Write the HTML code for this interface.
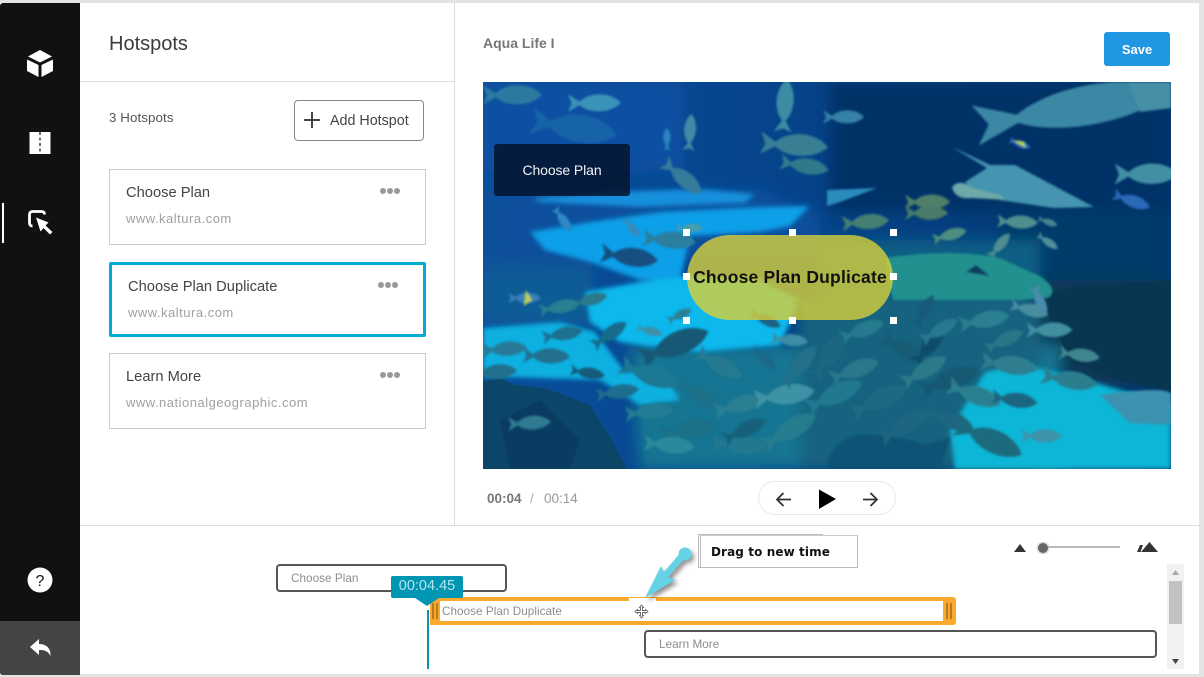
<!DOCTYPE html>
<html><head><meta charset="utf-8"><title>Hotspots</title>
<style>
html,body{margin:0;padding:0;width:1204px;height:677px;overflow:hidden;background:#e4e4e4}
body{font-family:"Liberation Sans",sans-serif;position:relative}
.a{position:absolute;box-sizing:border-box}
.t{position:absolute;white-space:nowrap;line-height:20px}
.card{position:absolute;box-sizing:border-box;left:109px;width:317px;height:76px;border:1px solid #ccc;background:#fff}
.tt{color:#444;font-size:14.700px}
.u{color:#a0a0a0;font-size:13px;letter-spacing:.5px}
.dots{position:absolute;display:flex;gap:1px}
.dots i{width:6px;height:6px;border-radius:50%;background:#999;display:block}
.h{position:absolute;width:7px;height:7px;background:#fff}
.trk{position:absolute;box-sizing:border-box;height:28px;border:2px solid #555;border-radius:4px;background:#fff}
.tl{color:#8c8c8c;font-size:11.700px;letter-spacing:.05px}
</style></head>
<body>
<div class="a" style="left:0;top:3px;width:1199px;height:671px;background:#fff"></div>
<!-- sidebar -->
<div class="a" style="left:0;top:3px;width:80px;height:672px;background:#111;border-radius:3px 0 0 3px;overflow:hidden">
<div class="a" style="left:0;top:618px;width:80px;height:54px;background:#444"></div>
</div>
<div class="a" style="left:2px;top:203px;width:2px;height:40px;background:#fff"></div>
<svg class="a" style="left:0;top:0" width="80" height="677" viewBox="0 0 80 677">
<path d="M40 50L52 56.500L40 62.500L28 56.500Z" fill="#fff"/>
<path d="M27 59.500L38.500 65V77L27 71Z M53 59.500L41.500 65V77L53 71Z" fill="#fff"/>
<path d="M29.500 132H50.500V154H29.500Z" fill="#fff"/>
<path d="M40 132V154" stroke="#111" stroke-width="1.200" stroke-dasharray="3 2.500"/>
<path d="M32.500 226C30 226 29.500 224.500 29.500 222.500V215C29.500 212.500 30.500 211.500 33 211.500H41.500C43.500 211.500 44.500 212.500 44.500 214.500" fill="none" stroke="#fff" stroke-width="2.800"/>
<path d="M36 217.500L48.500 222.500L45.500 225.500L52.500 232L50 234.500L43.500 228L40.500 231.500Z" fill="#fff"/>
<circle cx="40" cy="580" r="12.500" fill="#fff"/>
<text x="40" y="586" font-family="Liberation Sans" font-size="16" fill="#111" text-anchor="middle">?</text>
<path d="M30 647L39 639V644C46 644 51 648 50.500 656C48 651 45 650 39 650V655Z" fill="#fff"/>
</svg>
<!-- dividers -->
<div class="a" style="left:80px;top:81px;width:374px;height:1px;background:#ddd"></div>
<div class="a" style="left:454px;top:3px;width:1px;height:522px;background:#ddd"></div>
<div class="a" style="left:80px;top:525px;width:1119px;height:1px;background:#ddd"></div>
<!-- left panel -->
<div class="t" style="left:109px;top:34px;font-size:20px;color:#3c3c3c">Hotspots</div>
<div class="t" style="left:109px;top:108px;font-size:13.300px;color:#555;letter-spacing:.1px">3 Hotspots</div>
<div class="a" style="left:294px;top:100px;width:130px;height:41px;border:1px solid #888;border-radius:4px"></div>
<svg class="a" style="left:304px;top:112px" width="16" height="16"><path d="M8 0V16M0 8H16" stroke="#444" stroke-width="2"/></svg>
<div class="t" style="left:330px;top:111px;font-size:14.300px;color:#444">Add Hotspot</div>

<div class="card" style="top:169px"></div>
<div class="t tt" style="left:126px;top:183px">Choose Plan</div>
<div class="t u" style="left:126px;top:209px">www.kaltura.com</div>
<div class="dots" style="left:380px;top:188px"><i></i><i></i><i></i></div>

<div class="card" style="top:262px;height:75px;border:3px solid #00acd0;border-radius:2px"></div>
<div class="t tt" style="left:128px;top:277px">Choose Plan Duplicate</div>
<div class="t u" style="left:128px;top:303px">www.kaltura.com</div>
<div class="dots" style="left:378px;top:282px"><i></i><i></i><i></i></div>

<div class="card" style="top:353px"></div>
<div class="t tt" style="left:126px;top:367px">Learn More</div>
<div class="t u" style="left:126px;top:393px">www.nationalgeographic.com</div>
<div class="dots" style="left:380px;top:372px"><i></i><i></i><i></i></div>

<!-- right header -->
<div class="t" style="left:483px;top:33px;font-size:14px;font-weight:bold;color:#777">Aqua Life I</div>
<div class="a" style="left:1104px;top:32px;width:66px;height:34px;background:#2196e3;border-radius:3px"></div>
<div class="t" style="left:1104px;width:66px;text-align:center;top:40px;font-size:13px;font-weight:bold;color:#fff">Save</div>

<!-- video -->
<svg class="a" style="left:483px;top:82px" width="688" height="387" viewBox="483 82 688 387">
<defs>
<linearGradient id="bg" x1="0" y1="0" x2="1" y2="0"><stop offset="0" stop-color="#0a4f9c"/><stop offset=".45" stop-color="#05438a"/><stop offset="1" stop-color="#053870"/></linearGradient>
<filter id="b8" x="-20%" y="-20%" width="140%" height="140%"><feGaussianBlur stdDeviation="7"/></filter>
<filter id="b3" x="-20%" y="-20%" width="140%" height="140%"><feGaussianBlur stdDeviation="2.500"/></filter>
<filter id="b1" x="0" y="0" width="100%" height="100%"><feGaussianBlur stdDeviation="1"/></filter>
<path id="f" d="M50 0C32 -21 -8 -23 -30 -3L-52 -17L-45 1L-52 17L-30 4C-8 22 32 19 50 0Z"/>
</defs>
<rect x="483" y="82" width="688" height="387" fill="url(#bg)"/>
<g filter="url(#b8)">
<rect x="483" y="82" width="200" height="90" fill="#0a50a2"/>
<rect x="830" y="82" width="341" height="130" fill="#043268"/>
<rect x="1000" y="210" width="171" height="90" fill="#053a6a"/>
<path d="M483 190H760L820 215V260H483Z" fill="#074f9c"/>
<path d="M483 265H590L600 325H483Z" fill="#0a5c96"/>
<path d="M820 240H1040V320L820 340Z" fill="#0a5f85"/>
<path d="M1030 280H1171V385H1080L1030 340Z" fill="#073854"/>
<path d="M630 345H1060V469H640Z" fill="#187592"/>
<path d="M800 300H1040V469H800Z" fill="#14647f"/>
</g>
<g filter="url(#b3)">
<path d="M533 198L610 192L700 189L755 194L745 203L690 205L640 207L540 202Z" fill="#178fdc"/>
<path d="M530 232L590 222L660 212L760 207L810 206L790 226L760 232L690 236L680 280L640 280L590 262L545 250Z" fill="#0f9fe8"/>
<path d="M640 282L690 276L760 280L800 300L780 345L700 352L640 345L620 342L590 322L585 292Z" fill="#0bb8ec"/>
<path d="M483 328L560 322L595 332L625 372L660 368L680 400L640 405L600 380L483 376Z" fill="#0cb0e0"/>
<path d="M985 372L1020 364L1080 378L1171 405V469H955L950 430Z" fill="#10b6d6"/>
</g>
<!-- rocks -->
<path d="M483 382L500 378L515 385L545 388L590 405L612 440L627 469H483Z" fill="#0b4669"/>
<path d="M500 420L540 400L580 440L570 469H510Z" fill="#0a3b60"/>
<path d="M1040 295L1080 286L1171 280V392L1110 378L1070 360Z" fill="#083650"/>
<g filter="url(#b1)">
<path d="M827 469Q830 440 860 435Q900 435 925 445L950 438L940 469Z" fill="#0d5275"/>
<!-- upper fish -->
<use href="#f" transform="translate(513 95) scale(.58)" fill="#2a7aa0"/>
<use href="#f" transform="translate(595 103) scale(.52)" fill="#3a92b8"/>
<use href="#f" transform="translate(575 128) rotate(10) scale(.85)" fill="#1c68aa" opacity=".8"/>
<use href="#f" transform="translate(690 132) rotate(-85) scale(.36)" fill="#3f8ca4"/>
<use href="#f" transform="translate(667 139) rotate(-90) scale(.22)" fill="#2c84c0"/>
<use href="#f" transform="translate(683 178) rotate(40) scale(.48)" fill="#357b9c"/>
<use href="#f" transform="translate(785 105) rotate(-85) scale(.52)" fill="#3c8ca4"/>
<use href="#f" transform="translate(795 145) rotate(4) scale(.66)" fill="#377f94"/>
<use href="#f" transform="translate(805 166) rotate(10) scale(.48)" fill="#2f7a8c"/>
<use href="#f" transform="translate(844 117) scale(.4)" fill="#3580a6"/>
<g transform="translate(1075 108) rotate(-10) scale(1.95 1.2)"><use href="#f" fill="#3a88a4"/></g>
<path d="M1128 82H1171V108L1140 112Z" fill="#468fa6"/>
<use href="#f" transform="translate(1147 174) scale(.62)" fill="#428fa5"/>
<use href="#f" transform="translate(1132 201) rotate(20) scale(.38)" fill="#2a68b8"/>
<use href="#f" transform="translate(1020 144) rotate(20) scale(.22)" fill="#2a68b8"/>
<path d="M1012 140L1026 148L1024 142Z" fill="#b8d83c"/>
<path d="M952 147L990 165L1015 165L1094 207L1054 208L1000 200L974 192L965 182L987 168Z" fill="#4595b0"/>
<path d="M952 187Q960 178 972 188L1000 195L1005 200L972 198Q955 200 952 187Z" fill="#6ea8a8"/>
<path d="M827 190L877 188L840 202L827 206Z" fill="#2c8cbc"/>
<!-- cyan fish -->
<use href="#f" transform="translate(670 240) rotate(5) scale(.52)" fill="#2b7e9e"/>
<use href="#f" transform="translate(630 257) rotate(8) scale(.56)" fill="#174f7f"/>
<use href="#f" transform="translate(632 228) rotate(50) scale(.22)" fill="#3a88b8"/>
<use href="#f" transform="translate(563 220) rotate(55) scale(.28)" fill="#2f88c5"/>
<use href="#f" transform="translate(690 228) scale(.26)" fill="#469eaa"/>
<!-- right green fish -->
<use href="#f" transform="translate(928 202) scale(.44)" fill="#4f7f68"/>
<use href="#f" transform="translate(866 222) rotate(-4) scale(.46)" fill="#447f72"/>
<use href="#f" transform="translate(927 213) scale(.42)" fill="#487c68"/>
<use href="#f" transform="translate(950 235) rotate(-15) scale(.34)" fill="#4f8d80"/>
<use href="#f" transform="translate(1018 222) rotate(3) scale(.4)" fill="#4f8d8e"/>
<use href="#f" transform="translate(1048 222) rotate(20) scale(.2)" fill="#448290"/>
<use href="#f" transform="translate(1048 242) rotate(35) scale(.24)" fill="#4f8d98"/>
<use href="#f" transform="translate(1000 245) rotate(-50) scale(.3)" fill="#4f8d8e"/>
<!-- big ray -->
<path d="M885 258Q950 248 1000 258L1040 276Q1060 290 1048 298L1020 300H920L893 300Z" fill="#20908f"/>
<path d="M966 272L976 265L990 276Z" fill="#0b3d5e"/>
<!-- school -->
<use href="#f" transform="translate(525 298) scale(.32)" fill="#3a80b8"/>
<path d="M526 290L532 300L524 306Z" fill="#b8d050"/>
<use href="#f" transform="translate(560 307) rotate(-10) scale(.4)" fill="#2a7f90"/>
<use href="#f" transform="translate(590 300) rotate(-15) scale(.36)" fill="#2a7a8c"/>
<use href="#f" transform="translate(505 349) rotate(-4) scale(.44)" fill="#277a98"/>
<use href="#f" transform="translate(547 356) rotate(2) scale(.46)" fill="#20708c"/>
<use href="#f" transform="translate(495 372) rotate(-4) scale(.44)" fill="#22708e"/>
<use href="#f" transform="translate(588 373) rotate(10) scale(.34)" fill="#175a7c"/>
<use href="#f" transform="translate(618 392) rotate(-8) scale(.42)" fill="#1e6e8c"/>
<use href="#f" transform="translate(530 423) rotate(-3) scale(.42)" fill="#2d7a90"/>
<use href="#f" transform="translate(610 334) rotate(-35) scale(.4)" fill="#186a8a"/>
<use href="#f" transform="translate(563 334) rotate(-10) scale(.4)" fill="#1d7090"/>
<use href="#f" transform="translate(650 331) rotate(15) scale(.26)" fill="#3e90a8"/>
<use href="#f" transform="translate(675 345) rotate(-22) scale(.72)" fill="#195976"/>
<use href="#f" transform="translate(680 315) rotate(-25) scale(.26)" fill="#2e7f98"/>
<use href="#f" transform="translate(720 365) rotate(30) scale(.5)" fill="#257a90"/>
<use href="#f" transform="translate(650 375) rotate(20) scale(.6)" fill="#1f7893"/>
<use href="#f" transform="translate(700 395) rotate(30) scale(.45)" fill="#1a6f88"/>
<use href="#f" transform="translate(740 405) rotate(-15) scale(.5)" fill="#2a7f92"/>
<use href="#f" transform="translate(650 412) rotate(-5) scale(.48)" fill="#237c93"/>
<use href="#f" transform="translate(690 430) rotate(-10) scale(.55)" fill="#1b6f88"/>
<use href="#f" transform="translate(670 445) rotate(5) scale(.5)" fill="#2a8a9c"/>
<use href="#f" transform="translate(740 445) rotate(5) scale(.55)" fill="#23788f"/>
<use href="#f" transform="translate(785 395) rotate(-8) scale(.6)" fill="#3c93a5"/>
<use href="#f" transform="translate(745 430) rotate(-25) scale(.45)" fill="#16607c"/>
<use href="#f" transform="translate(790 430) rotate(-30) scale(.6)" fill="#277c8f"/>
<use href="#f" transform="translate(765 360) rotate(40) scale(.3)" fill="#1d6888"/>
<use href="#f" transform="translate(766 320) rotate(25) scale(.32)" fill="#1a6384"/>
<use href="#f" transform="translate(800 365) rotate(-50) scale(.5)" fill="#20708a"/>
<use href="#f" transform="translate(790 340) rotate(5) scale(.36)" fill="#3d8da5"/>
<use href="#f" transform="translate(830 355) rotate(-55) scale(.55)" fill="#1a6680"/>
<use href="#f" transform="translate(855 370) rotate(-20) scale(.5)" fill="#2a788c"/>
<use href="#f" transform="translate(810 310) rotate(35) scale(.36)" fill="#1c6480"/>
<use href="#f" transform="translate(863 330) rotate(-20) scale(.45)" fill="#257a8e"/>
<use href="#f" transform="translate(835 395) rotate(-25) scale(.6)" fill="#23788e"/>
<use href="#f" transform="translate(905 350) rotate(30) scale(.5)" fill="#185b75"/>
<use href="#f" transform="translate(930 345) rotate(-50) scale(.45)" fill="#114c6b"/>
<use href="#f" transform="translate(925 370) rotate(-30) scale(.5)" fill="#2a7a8a"/>
<use href="#f" transform="translate(940 330) rotate(-30) scale(.4)" fill="#257a8e"/>
<use href="#f" transform="translate(925 310) rotate(-60) scale(.34)" fill="#165a78"/>
<use href="#f" transform="translate(950 380) rotate(-20) scale(.6)" fill="#155872"/>
<use href="#f" transform="translate(880 400) rotate(-25) scale(.6)" fill="#1c6a82"/>
<use href="#f" transform="translate(905 425) rotate(-30) scale(.55)" fill="#1a6680"/>
<use href="#f" transform="translate(950 420) rotate(20) scale(.5)" fill="#1a6680"/>
<use href="#f" transform="translate(985 320) rotate(-10) scale(.5)" fill="#2c7f90"/>
<use href="#f" transform="translate(1005 340) rotate(-25) scale(.4)" fill="#2a7688"/>
<use href="#f" transform="translate(1010 365) rotate(8) scale(.56)" fill="#2f7e90"/>
<use href="#f" transform="translate(975 395) rotate(20) scale(.55)" fill="#2a7f90"/>
<use href="#f" transform="translate(1015 400) rotate(8) scale(.45)" fill="#1f6580"/>
<use href="#f" transform="translate(990 440) rotate(25) scale(.7)" fill="#1e6a7e"/>
<use href="#f" transform="translate(1042 436) rotate(0) scale(.4)" fill="#3d93a8"/>
<use href="#f" transform="translate(1050 330) rotate(0) scale(.45)" fill="#3f8ea0"/>
<use href="#f" transform="translate(1040 302) rotate(70) scale(.32)" fill="#4a8cb0"/>
<use href="#f" transform="translate(1030 310) rotate(15) scale(.38)" fill="#468ea0"/>
<use href="#f" transform="translate(1070 380) rotate(10) scale(.55)" fill="#2a7e8e"/>
<use href="#f" transform="translate(1080 355) rotate(8) scale(.4)" fill="#3f8690"/>
<path d="M1100 395Q1171 385 1171 395V425L1130 423Z" fill="#3e92b0"/>
</g>
</svg>
<!-- overlays -->
<div class="a" style="left:494px;top:144px;width:136px;height:52px;background:rgba(3,22,48,.88);border-radius:3px"></div>
<div class="t" style="left:494px;width:136px;text-align:center;top:160px;font-size:14px;color:#f2f2f2;letter-spacing:-.1px">Choose Plan</div>
<div class="a" style="left:687px;top:235px;width:206px;height:85px;border-radius:42.500px;background:rgba(216,208,58,.8)"></div>
<div class="t" style="left:687px;width:206px;text-align:center;top:267px;font-size:17.500px;font-weight:bold;color:#111;letter-spacing:.2px">Choose Plan Duplicate</div>
<div class="h" style="left:683px;top:229px"></div><div class="h" style="left:789px;top:229px"></div><div class="h" style="left:890px;top:229px"></div>
<div class="h" style="left:683px;top:273px"></div><div class="h" style="left:890px;top:273px"></div>
<div class="h" style="left:683px;top:317px"></div><div class="h" style="left:789px;top:317px"></div><div class="h" style="left:890px;top:317px"></div>

<!-- playback -->
<div class="t" style="left:487px;top:489px;font-size:13.500px;font-weight:bold;color:#777">00:04</div>
<div class="t" style="left:530px;top:489px;font-size:13px;color:#aaa">/</div>
<div class="t" style="left:544px;top:489px;font-size:13.500px;color:#999">00:14</div>
<div class="a" style="left:758px;top:481px;width:138px;height:34px;border:1px solid #e8e8e8;border-radius:17px"></div>
<svg class="a" style="left:758px;top:481px" width="138" height="34">
<path d="M33 18.500H19M25.500 12L19 18.500L25.500 25" fill="none" stroke="#333" stroke-width="1.800"/>
<path d="M61 8.500L78 18L61 28Z" fill="#000"/>
<path d="M105 18.500H119M112.500 12L119 18.500L112.500 25" fill="none" stroke="#333" stroke-width="1.800"/>
</svg>

<!-- timeline -->
<div class="trk" style="left:276px;top:564px;width:231px"></div>
<div class="t tl" style="left:291px;top:569px">Choose Plan</div>
<div class="trk" style="left:644px;top:630px;width:513px"></div>
<div class="t tl" style="left:659px;top:635px">Learn More</div>
<div class="a" style="left:430px;top:597px;width:526px;height:28px;background:#f8a92e;border-radius:0 3px 3px 0"></div>
<div class="a" style="left:440px;top:601px;width:503px;height:20px;background:#fff"></div>
<div class="a" style="left:629px;top:598px;width:27px;height:4px;background:#fff"></div>
<div class="a" style="left:432px;top:603px;width:2px;height:16px;background:#b97a1c"></div>
<div class="a" style="left:436px;top:603px;width:2px;height:16px;background:#b97a1c"></div>
<div class="a" style="left:946px;top:603px;width:1.500px;height:16px;background:#b97a1c"></div>
<div class="a" style="left:950px;top:603px;width:1.500px;height:16px;background:#b97a1c"></div>
<div class="t tl" style="left:442px;top:602px">Choose Plan Duplicate</div>
<svg class="a" style="left:634px;top:604px" width="15" height="15" viewBox="0 0 15 15"><path d="M7.500 1L9.500 3.500H8.500V6.500H11.500V5.500L14 7.500L11.500 9.500V8.500H8.500V11.500H9.500L7.500 14L5.500 11.500H6.500V8.500H3.500V9.500L1 7.500L3.500 5.500V6.500H6.500V3.500H5.500Z" fill="#fff" stroke="#666" stroke-width=".9"/></svg>
<div class="a" style="left:427px;top:610px;width:2px;height:59px;background:#0d8fb0"></div>
<div class="a" style="left:391px;top:576px;width:72px;height:22px;background:#0095b3;border-radius:2px"></div>
<svg class="a" style="left:415px;top:598px" width="26" height="9"><path d="M0 0H24L12 8Z" fill="#0095b3"/></svg>
<div class="t" style="left:391px;width:72px;text-align:center;top:576px;font-size:14.500px;color:#b5e6ef">00:04.45</div>
<!-- callout -->
<div class="a" style="left:698px;top:534px;width:125px;height:34px;background:#fff;border:1px solid #bbb"></div>
<div class="a" style="left:700px;top:535px;width:158px;height:33px;background:#fff;border:1px solid #bbb;border-top-color:#ccc"></div>
<div class="t" style="left:711px;top:542px;font-weight:bold;color:#111;font-family:'DejaVu Sans','Liberation Sans',sans-serif;font-size:12px;letter-spacing:.1px">Drag to new time</div>
<svg class="a" style="left:630px;top:535px" width="75" height="75" viewBox="630 535 75 75">
<defs><filter id="sh" x="-40%" y="-40%" width="200%" height="200%"><feGaussianBlur stdDeviation="2.500"/></filter></defs>
<g fill="#444" opacity=".6" filter="url(#sh)" transform="translate(3 3)"><circle cx="685" cy="554" r="6"/><path d="M645 598L661 566L664 572L681 552L686 557L668 577L675 580Z"/></g>
<circle cx="685" cy="554" r="6.500" fill="#66d2e6"/>
<path d="M645 598L661 566L664 572L681 552L686 557L668 577L675 580Z" fill="#66d2e6"/>
</svg>
<!-- zoom slider -->
<svg class="a" style="left:1010px;top:535px" width="155" height="25">
<path d="M4 17L10 9L16 17Z" fill="#333"/>
<rect x="33" y="11" width="77" height="2" fill="#bbb"/>
<circle cx="33" cy="13" r="6.500" fill="#bbb" opacity=".5"/>
<circle cx="33" cy="13" r="5" fill="#666"/>
<path d="M127 17L130 10L133 10L130.500 17Z" fill="#333"/>
<path d="M131 17L139.500 7L148 17Z" fill="#333"/>
</svg>
<!-- scrollbar -->
<div class="a" style="left:1167px;top:564px;width:17px;height:105px;background:#f1f1f1"></div>
<div class="a" style="left:1169px;top:581px;width:13px;height:43px;background:#c1c1c1"></div>
<svg class="a" style="left:1167px;top:564px" width="17" height="105"><path d="M5 11L8.500 6L12 11Z" fill="#aaa"/><path d="M5 95H12L8.500 100Z" fill="#444"/></svg>
</body></html>
